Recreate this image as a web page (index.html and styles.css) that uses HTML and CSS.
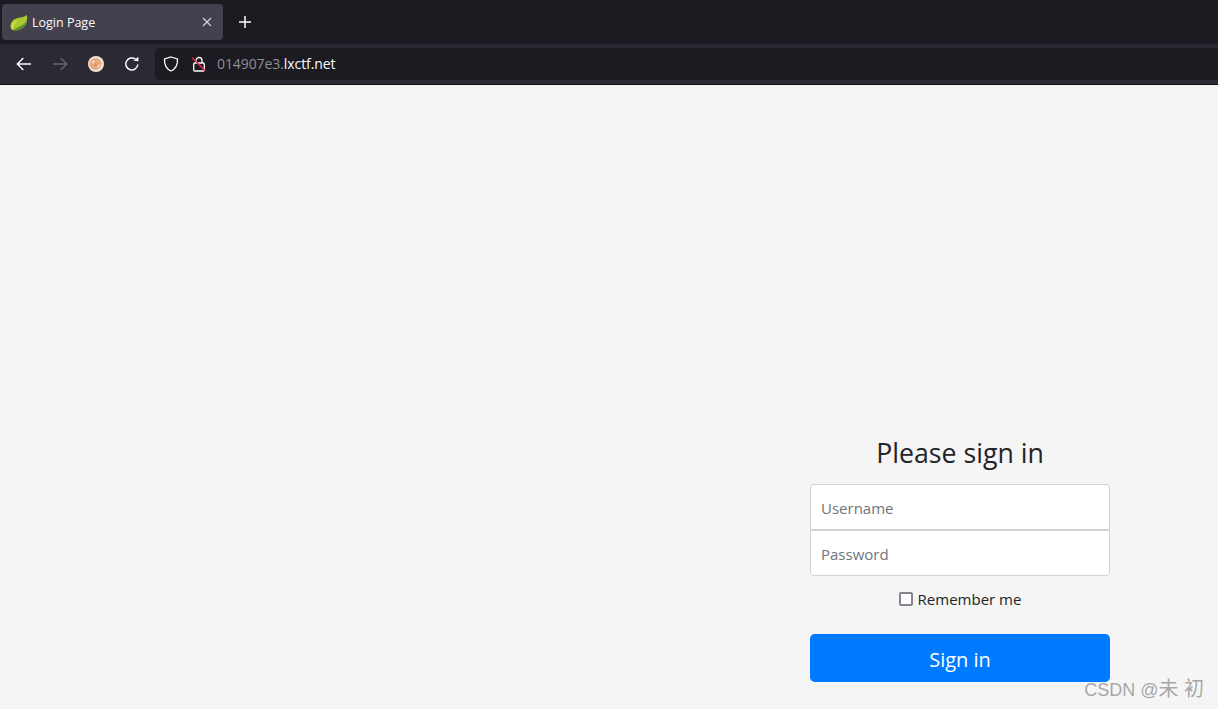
FILE: index.html
```html
<!DOCTYPE html>
<html>
<head>
    <meta charset="UTF-8">
    <title>Login Page</title>
    <link rel="stylesheet" href="styles.css">
</head>
<body>
    <div class="tabstrip">
        <div class="tab">
            <svg class="favicon" width="18" height="17" viewBox="0 0 18 17">
                <path d="M16.800 .5C16 1.800 14.800 2.600 13 2.900C9 3.400 5.500 3.800 3 6.300C.8 8.500 .2 11.500 1 14C1.500 15 2 15.600 3 16C4.500 16.500 6.500 16.500 8.500 16C12.500 15 15 12.500 16.300 9C17.200 6.500 17.400 3.500 16.800 .5Z" fill="#a9c832"/>
                <path d="M1.500 15C1 14 .5 12.500 .8 11C2 8.500 5 6.500 9 6C6 8 4 11 3.200 16Z" fill="#cbd640"/>
                <path d="M3.400 16C6 14 9.500 13 12.500 11C14 10 15.500 8.500 16.300 7.500C15.500 11.500 12.500 15 8.500 16C6.500 16.500 4.800 16.400 3.400 16Z" fill="#5f8f22"/>
            </svg>
            <span class="tab-title">Login Page</span>
            <svg class="tab-close" width="10" height="10" viewBox="0 0 10 10">
                <path d="M1 1L9 9M9 1L1 9" stroke="#d8d8dc" stroke-width="1.100" fill="none"/>
            </svg>
        </div>
        <svg class="new-tab" width="14" height="14" viewBox="0 0 14 14">
            <path d="M7 1V13M1 7H13" stroke="#fbfbfe" stroke-width="1.500" fill="none"/>
        </svg>
    </div>

    <div class="navbar">
        <svg class="nav-icon" width="16" height="14" viewBox="0 0 16 14">
            <path d="M15 7H1.500M7.300 1L1.300 7L7.300 13" stroke="#fbfbfe" stroke-width="1.400" fill="none"/>
        </svg>
        <svg class="nav-icon" width="16" height="14" viewBox="0 0 16 14">
            <path d="M1 7H14.500M8.700 1L14.700 7L8.700 13" stroke="#66656c" stroke-width="1.400" fill="none"/>
        </svg>
        <svg class="avatar" width="16" height="16" viewBox="0 0 16 16">
            <circle cx="8" cy="8" r="8" fill="#f0e4d8"/>
            <circle cx="7.500" cy="8" r="6" fill="#e9a77e"/>
            <circle cx="5" cy="6" r="1.500" fill="#f6d3ba"/>
            <circle cx="10.500" cy="10" r="1.800" fill="#f3c8ac"/>
            <circle cx="8" cy="9" r="1.300" fill="#d98a60"/>
        </svg>
        <svg class="nav-icon" width="16" height="16" viewBox="0 0 16 16">
            <path d="M13.800 8.500A6 6 0 1 1 11.500 3.200" stroke="#fbfbfe" stroke-width="1.500" fill="none"/>
            <path d="M9.500 4.800L14.500 5.300L14.300 .8Z" fill="#fbfbfe"/>
        </svg>
        <div class="urlbar">
            <svg class="shield" width="16" height="16" viewBox="0 0 16 16">
                <path d="M8 1L14.500 3C14.800 9 12.500 13 8 15C3.500 13 1.200 9 1.500 3Z" stroke="#fbfbfe" stroke-width="1.300" fill="none"/>
            </svg>
            <svg class="lock" width="16" height="16" viewBox="0 0 16 16">
                <path d="M5 7V4.500A3 3 0 0 1 11 4.500V7" stroke="#fbfbfe" stroke-width="1.300" fill="none"/>
                <rect x="2.700" y="7" width="10.600" height="8" rx="1.200" stroke="#fbfbfe" stroke-width="1.300" fill="none"/>
                <path d="M1 1.500L14.500 15" stroke="#e22850" stroke-width="1.500"/>
            </svg>
            <span class="url"><span class="url-sub">014907e3.</span>lxctf.net</span>
        </div>
    </div>

    <div class="page">
        <form class="signin">
            <h2 class="signin-heading">Please sign in</h2>
            <input class="field field-top" type="text" placeholder="Username">
            <input class="field field-bottom" type="password" placeholder="Password">
            <label class="remember">
                <span class="check"></span>
                Remember me
            </label>
            <button class="btn-signin" type="button">Sign in</button>
        </form>
        <div class="watermark">CSDN @<span class="watermark-name">未 初</span></div>
    </div>
</body>
</html>
```
FILE: styles.css
```css
* {
    box-sizing: border-box;
}

html, body {
    height: 100%;
}

body {
    margin: 0;
    display: flex;
    flex-direction: column;
    overflow: hidden;
    background: #f5f5f5;
    font-family: "Open Sans", "Noto Sans", "Liberation Sans", sans-serif;
}

.tabstrip {
    height: 44px;
    display: flex;
    align-items: center;
    gap: 15px;
    padding-left: 2px;
    background: #1c1b22;
}

.tab {
    width: 221px;
    height: 36px;
    display: flex;
    align-items: center;
    padding: 0 11px 0 8px;
    background: #42414d;
    border-radius: 4px;
}

.favicon {
    flex: none;
    margin-right: 4px;
}

.tab-title {
    flex: 1;
    color: #fbfbfe;
    font-size: 12.500px;
}

.navbar {
    height: 41px;
    display: flex;
    align-items: center;
    padding: 4px 0 4px 16px;
    background: #2b2a33;
    border-bottom: 1px solid #0c0c0d;
}

.nav-icon {
    flex: none;
}

.nav-icon + .nav-icon {
    margin-left: 20px;
}

.avatar {
    flex: none;
    margin: 0 20px;
}

.urlbar {
    width: 1063px;
    height: 32px;
    display: flex;
    align-items: center;
    margin-left: 15px;
    padding-left: 8px;
    background: #1c1b22;
    border-radius: 4px 0 0 4px;
}

.shield {
    margin-right: 12px;
}

.lock {
    margin-right: 10px;
}

.url {
    margin-top: -2px;
    color: #fbfbfe;
    font-size: 14px;
    letter-spacing: -0.080px;
}

.url-sub {
    color: #8f8f96;
}

.page {
    flex: 1;
    position: relative;
    display: flex;
    justify-content: flex-end;
    align-items: flex-start;
    padding: 349px 108px 0 0;
}

.signin {
    width: 300px;
    display: flex;
    flex-direction: column;
}

.signin-heading {
    margin: 0 0 12px;
    color: #212529;
    font-size: 26.700px;
    font-weight: 400;
    line-height: 38px;
    text-align: center;
}

.field {
    width: 100%;
    height: 46px;
    padding: 12px 10px 10px;
    background: #fff;
    border: 1px solid #ced4da;
    font-family: inherit;
    font-size: 15px;
    color: #495057;
}

.field::placeholder {
    color: #6c757d;
    opacity: 1;
}

.field-top {
    border-radius: 4px 4px 0 0;
}

.field-bottom {
    border-radius: 0 0 4px 4px;
}

.remember {
    height: 46px;
    display: flex;
    align-items: center;
    justify-content: center;
    gap: 5px;
    margin-bottom: 12px;
    color: #212529;
    font-size: 15px;
}

.check {
    width: 14px;
    height: 14px;
    background: #fff;
    border: 2px solid #85858f;
    border-radius: 2px;
}

.btn-signin {
    height: 48px;
    padding: 3px 0 0;
    background: #007bff;
    border: none;
    border-radius: 4.800px;
    color: #fff;
    font-family: inherit;
    font-size: 20px;
}

.watermark {
    position: absolute;
    right: 14px;
    bottom: 6px;
    color: rgba(120, 120, 120, 0.65);
    font-family: "Liberation Sans", "Noto Sans CJK SC", sans-serif;
    font-size: 18px;
    line-height: 26px;
    white-space: nowrap;
}

.watermark-name {
    font-size: 20px;
}
```
